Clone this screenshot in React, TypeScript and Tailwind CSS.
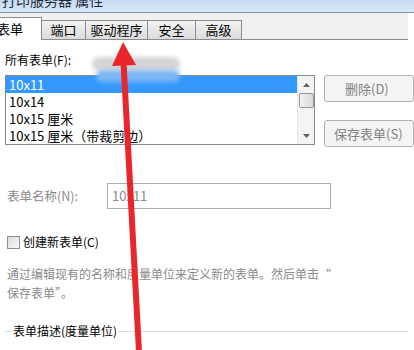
import React from "react";

const font = { fontFamily: '"Noto Sans CJK SC", "Noto Sans", sans-serif' };

function Tab({ label, selected, w }: { label: string; selected?: boolean; w: string }) {
    if (selected) {
        return (
            <div className={`relative z-10 -mb-px h-[23px] ${w} border border-b-0 border-[#898c95] bg-white flex items-center justify-center text-[13px] text-black`}>
                {label}
            </div>
        );
    }
    return (
        <div className={`mt-[3px] h-[19px] ${w} border border-l-0 border-b-0 border-[#898c95] bg-gradient-to-b from-[#f2f2f2] to-[#dcdcdc] flex items-center justify-center text-[13px] text-black`}>
            {label}
        </div>
    );
}

export default function App() {
    const items = ["10x11", "10x14", "10x15 厘米", "10x15 厘米（带裁剪边）"];

    return (
        <div className="relative w-[414px] h-[350px] overflow-hidden bg-white" style={font}>
            {/* title bar */}
            <div className="h-[13px] overflow-hidden bg-gradient-to-b from-[#c3daf3] to-[#dbe9f8] border-b border-[#7f97b1]">
                <div className="-mt-[8px] pl-[2px] text-[14px] leading-[16px] text-[#1e2a38]">打印服务器 属性</div>
            </div>

            {/* tab band */}
            <div className="w-[408px] h-[27px] bg-[#f0f0f0] flex items-end border-b border-[#898c95]">
                <div className="flex items-start -ml-[22px]">
                    <Tab label="表单" selected w="w-[64px]" />
                    <Tab label="端口" w="w-[44px]" />
                    <Tab label="驱动程序" w="w-[62px]" />
                    <Tab label="安全" w="w-[48px]" />
                    <Tab label="高级" w="w-[46px]" />
                </div>
            </div>

            {/* body */}
            <div className="pl-[5px] pt-[13px]">
                <div className="text-[12px] leading-[14px] text-black">所有表单(F):</div>

                <div className="mt-[8px] flex items-start">
                    <div className="w-[327px] h-[70px] border border-[#828790] flex bg-white">
                        <div className="flex-1 flex flex-col">
                            {items.map((t, i) => (
                                <div
                                    key={t}
                                    className={`h-[17px] overflow-hidden pl-[3px] text-[13px] leading-[17px] ${i === 0 ? "bg-[#3399ff] text-white" : "text-black"}`}
                                >
                                    {t}
                                </div>
                            ))}
                        </div>
                        <div className="w-[17px] flex flex-col items-center bg-[#f4f4f4] border-l border-[#e6e6e6]">
                            <div className="h-[17px] flex items-center justify-center">
                                <svg width="7" height="4" viewBox="0 0 7 4"><path d="M0 4 L3.5 0 L7 4 Z" fill="#606060" /></svg>
                            </div>
                            <div className="w-[15px] h-[15px] rounded-[2px] border border-[#979797] bg-gradient-to-r from-[#f2f2f2] to-[#d8d8d8]" />
                            <div className="flex-1" />
                            <div className="h-[17px] flex items-center justify-center">
                                <svg width="7" height="4" viewBox="0 0 7 4"><path d="M0 0 L3.5 4 L7 0 Z" fill="#606060" /></svg>
                            </div>
                        </div>
                    </div>

                    <div className="ml-[9px] flex flex-col gap-[18px]">
                        <div className="w-[90px] h-[27px] rounded-[3px] border border-[#adb2b5] bg-[#f4f4f4] flex items-center pl-[20px] text-[13px] text-[#838383]">
                            删除(D)
                        </div>
                        <div className="w-[90px] h-[27px] rounded-[3px] border border-[#adb2b5] bg-[#f4f4f4] flex items-center pl-[9px] text-[13px] text-[#838383] whitespace-nowrap">
                            保存表单(S)
                        </div>
                    </div>
                </div>

                <div className="mt-[36px] flex items-center">
                    <div className="w-[102px] pl-[2px] text-[12.5px] text-[#8a8a8a]">表单名称(N):</div>
                    <div className="w-[224px] h-[26px] border border-[#abadb3] flex items-center pl-[4px] text-[13px] text-[#8a8a8a]">
                        10x11
                    </div>
                </div>

                <div className="mt-[26px] flex items-center pl-[2px]">
                    <div className="w-[13px] h-[13px] border border-[#8f8f8f] bg-gradient-to-br from-[#dcdcdc] to-[#f7f7f7]" />
                    <div className="ml-[3px] text-[12px] leading-[14px] text-black">创建新表单(C)</div>
                </div>

                <div className="mt-[15px] pl-[2px] text-[12px] leading-[19px] text-[#8a8a8a]">
                    <div>通过编辑现有的名称和度量单位来定义新的表单。然后单击“</div>
                    <div>保存表单”。</div>
                </div>

                <div className="mt-[22px] flex items-center w-[403px]">
                    <div className="w-[7px] h-px bg-[#d5dfe5]" />
                    <div className="px-[1px] text-[12px] leading-[14px] text-black">表单描述(度量单位)</div>
                    <div className="flex-1 h-px bg-[#d5dfe5]" />
                </div>
            </div>

            {/* redaction blur */}
            <div className="absolute left-[92px] top-[57px] w-[88px] h-[14px] bg-[#d4d4d4] blur-[2px] rounded-full" />
            <div className="absolute left-[96px] top-[70px] w-[84px] h-[12px] bg-[#7db6f2] blur-[2px] rounded-full" />

            {/* red arrow */}
            <svg className="absolute left-0 top-0 pointer-events-none" width="414" height="350" viewBox="0 0 414 350">
                <path d="M120.5 62 L126.5 62 L142 352 L136 352 Z" fill="#e8262b" />
                <path d="M123 42 L112 66 L136 65 Z" fill="#e8262b" />
            </svg>
        </div>
    );
}
